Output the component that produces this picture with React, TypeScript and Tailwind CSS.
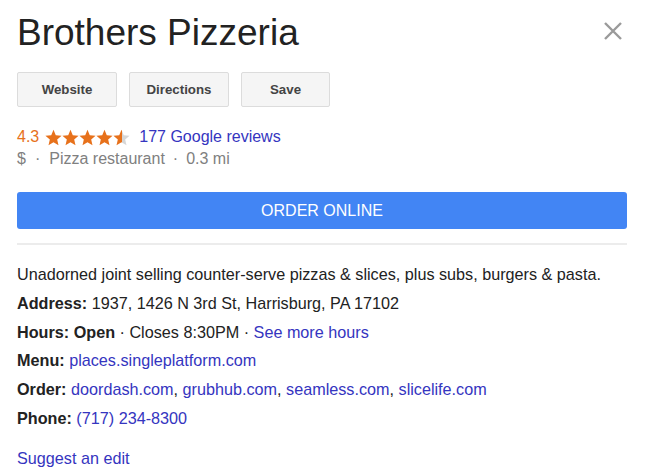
const STAR = "M12 17.27L18.18 21l-1.64-7.03L22 9.24l-7.19-.61L12 2 9.19 8.63 2 9.24l5.46 4.73L5.82 21z";

function Star({ fill }: { fill: "full" | "half" }) {
  return (
    <svg width="17" height="17" viewBox="1.5 1 21 21">
      {fill === "half" && (
        <defs>
          <linearGradient id="halfStar" x1="0" x2="1" y1="0" y2="0">
            <stop offset="52%" stopColor="#e7711b" />
            <stop offset="52%" stopColor="#d6d6d6" />
          </linearGradient>
        </defs>
      )}
      <path d={STAR} fill={fill === "half" ? "url(#halfStar)" : "#e7711b"} />
    </svg>
  );
}

function ActionButton({ label, width }: { label: string; width: string }) {
  return (
    <button
      className={`${width} h-[35px] rounded-[2px] border border-[#dcdcdc] bg-[#f5f5f5] text-[13.3px] font-bold text-[#444]`}
    >
      {label}
    </button>
  );
}

function Link({ children }: { children: React.ReactNode }) {
  return <span className="text-[#3535c0]">{children}</span>;
}

export default function App() {
  return (
    <div className="h-[473px] w-[646px] overflow-hidden bg-white pl-[17px] pr-[19px] font-['Liberation_Sans',Arial,sans-serif] text-[#222]">
      <div className="flex items-start justify-between pt-[14px]">
        <h1 className="text-[37px] leading-[37px] text-[#222]">Brothers Pizzeria</h1>
        <svg className="mr-[5px] mt-[8px]" width="18" height="18" viewBox="0 0 18 18">
          <path d="M1 1L17 17M17 1L1 17" stroke="#9a9a9a" strokeWidth="2.4" />
        </svg>
      </div>

      <div className="mt-[21px] flex gap-[12px]">
        <ActionButton label="Website" width="w-[100px]" />
        <ActionButton label="Directions" width="w-[100px]" />
        <ActionButton label="Save" width="w-[89px]" />
      </div>

      <div className="mt-[19px] flex items-center text-[16px] leading-[22px]">
        <span className="mr-[6px] text-[#e7711b]">4.3</span>
        <div className="flex">
          <Star fill="full" />
          <Star fill="full" />
          <Star fill="full" />
          <Star fill="full" />
          <Star fill="half" />
        </div>
        <span className="ml-[9px]">
          <Link>177 Google reviews</Link>
        </span>
      </div>
      <div className="flex text-[16px] leading-[22px] text-[#808080]">
        <span>$</span>
        <span className="mx-[9px]">·</span>
        <span>Pizza restaurant</span>
        <span className="mx-[8px]">·</span>
        <span>0.3 mi</span>
      </div>

      <button className="mt-[22px] flex h-[37px] w-full items-center justify-center rounded-[3px] bg-[#4285f4] text-[16px] text-white">
        ORDER ONLINE
      </button>

      <div className="mt-[14px] h-[2px] bg-[#ececec]" />

      <div className="mt-[15px] text-[16.2px] leading-[28.8px]">
        <div>Unadorned joint selling counter-serve pizzas &amp; slices, plus subs, burgers &amp; pasta.</div>
        <div>
          <b>Address:</b> 1937, 1426 N 3rd St, Harrisburg, PA 17102
        </div>
        <div>
          <b>Hours: Open</b> · Closes 8:30PM · <Link>See more hours</Link>
        </div>
        <div>
          <b>Menu:</b> <Link>places.singleplatform.com</Link>
        </div>
        <div>
          <b>Order:</b> <Link>doordash.com</Link>, <Link>grubhub.com</Link>, <Link>seamless.com</Link>,{" "}
          <Link>slicelife.com</Link>
        </div>
        <div>
          <b>Phone:</b> <Link>(717) 234-8300</Link>
        </div>
      </div>

      <div className="mt-[11px] text-[16.2px] leading-[28px]">
        <Link>Suggest an edit</Link>
      </div>
    </div>
  );
}
